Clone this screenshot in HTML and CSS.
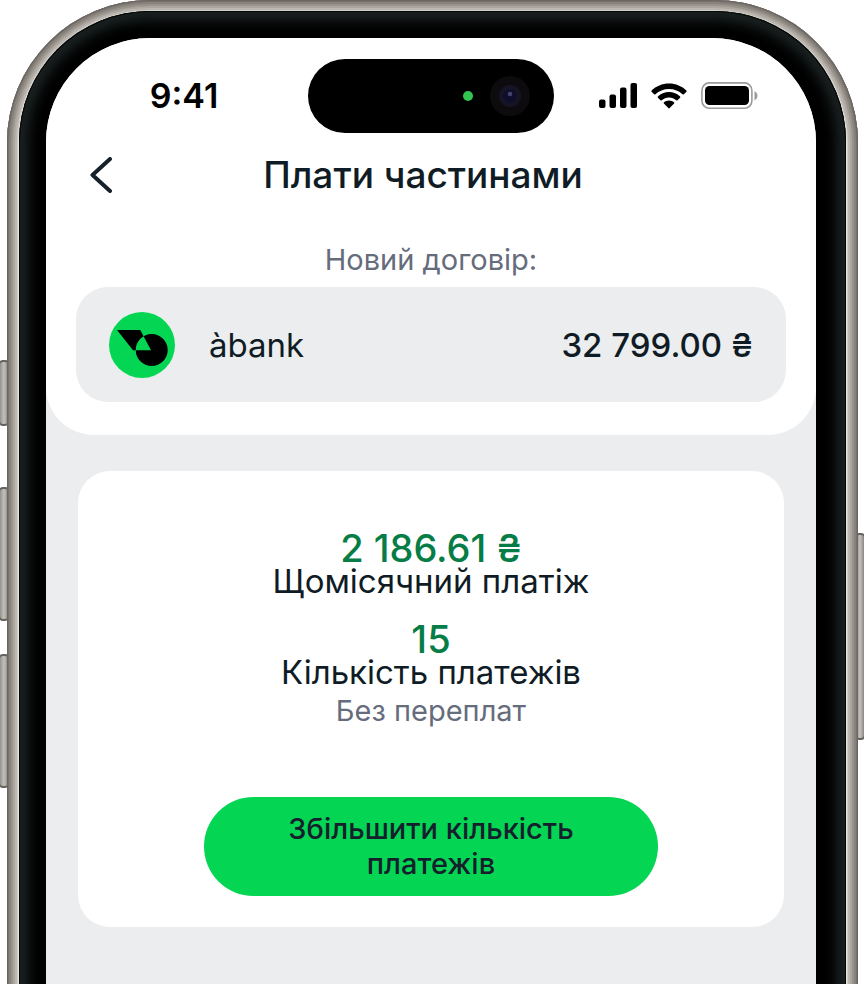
FILE: index.html
```html
<!DOCTYPE html>
<html lang="uk">
  <head>
    <meta charset="UTF-8" />
    <meta name="viewport" content="width=device-width, initial-scale=1.0" />
    <title>Плати частинами</title>
    <link rel="stylesheet" href="styles.css">
  </head>
  <body>
    <div class="stage">
      <!-- Side keys -->
      <span class="key key-left key-action"></span>
      <span class="key key-left key-up"></span>
      <span class="key key-left key-down"></span>
      <span class="key key-right key-power"></span>

      <div class="phone">
        <div class="bezel">
          <main class="screen">
            <section class="top-panel">
              <div class="status-bar">
                <div class="time">9:41</div>
                <div class="island">
                  <span class="dot"></span>
                  <svg class="camera" width="40" height="40" viewBox="0 0 40 40" aria-hidden="true">
                    <circle cx="20" cy="20" r="20" fill="#0d0b0e" />
                    <circle cx="20" cy="20" r="11" fill="#161325" />
                    <circle cx="20" cy="20" r="6.500" fill="#0e0d2c" />
                    <circle cx="20" cy="18" r="2.300" fill="#45436b" />
                  </svg>
                </div>
                <div class="indicators">
                  <svg width="38" height="26" viewBox="0 0 38 26" aria-hidden="true">
                    <rect x="0" y="16.500" width="6.500" height="8.500" rx="2" />
                    <rect x="10.500" y="11.500" width="6.500" height="13.500" rx="2" />
                    <rect x="21" y="4.500" width="6.500" height="20.500" rx="2" />
                    <rect x="31.500" y="0" width="6.500" height="25" rx="2" />
                  </svg>
                  <svg width="36" height="26" viewBox="0 0 36 26" aria-hidden="true">
                    <path d="M18 0.500C11.200 0.500 5 3.200 0.600 7.500c-.4.400-.4.900 0 1.300l2.500 2.500c.4.400.9.400 1.300 0C8 7.900 12.700 5.900 18 5.900s10 2 13.600 5.400c.4.400.9.400 1.300 0l2.500-2.500c.4-.4.400-.9 0-1.300C31 3.200 24.800.500 18 .500z" />
                    <path d="M18 9c-4.300 0-8.200 1.700-11.100 4.400-.4.400-.4.900 0 1.300l2.600 2.600c.3.300.8.300 1.200 0 1.900-1.800 4.500-2.900 7.300-2.900s5.400 1.100 7.300 2.900c.4.300.9.300 1.200 0l2.600-2.600c.4-.4.400-.9 0-1.300C26.200 10.700 22.300 9 18 9z" />
                    <path d="M18 17.500c-1.900 0-3.700.7-5 1.800-.5.400-.5.900-.1 1.300l4.400 4.500c.4.400 1 .4 1.400 0l4.400-4.500c.4-.4.400-.9-.1-1.300-1.300-1.100-3.100-1.800-5-1.800z" />
                  </svg>
                  <svg width="57" height="28" viewBox="0 0 57 28" aria-hidden="true">
                    <rect x="0.900" y="0.900" width="50" height="25.400" rx="7.500" fill="none" stroke="#9b9b9b" stroke-width="1.600" />
                    <rect x="4" y="4" width="44" height="19" rx="4.500" />
                    <path d="M53.500 9.200c1.800.8 3 2.600 3 4.600s-1.200 3.800-3 4.600z" fill="#9b9b9b" />
                  </svg>
                </div>
              </div>

              <header class="app-header">
                <button class="back" type="button" aria-label="Назад">
                  <svg width="22" height="36" viewBox="0 0 22 36" aria-hidden="true">
                    <path d="M20 2L2.500 18L20 34" fill="none" stroke="#17212a" stroke-width="4" stroke-linecap="round" stroke-linejoin="round" />
                  </svg>
                </button>
                <h1>Плати частинами</h1>
              </header>

              <p class="caption">Новий договір:</p>
              <div class="account">
                <svg width="66" height="66" viewBox="0 0 66 66" aria-hidden="true">
                  <circle cx="33" cy="33" r="33" fill="#04d654" />
                  <path fill-rule="evenodd" d="M8 18H31.300L42 38.300H24ZM26.700 38a16 16 0 1 0 32 0a16 16 0 1 0 -32 0Z" />
                </svg>
                <span class="bank">àbank</span>
                <span class="amount">32 799.00 ₴</span>
              </div>
            </section>

            <section class="card">
              <p class="value">2 186.61 ₴</p>
              <p class="label">Щомісячний платіж</p>
              <p class="value value-next">15</p>
              <p class="label">Кількість платежів</p>
              <p class="note">Без переплат</p>
              <button class="btn" type="button">Збільшити кількість платежів</button>
            </section>
          </main>
        </div>
      </div>
    </div>
  </body>
</html>
```
FILE: styles.css
```css
:root {
  --ink: #101c25;
  --muted: #656c7c;
  --surface: #ecedef;
  --green: #04d654;
  --green-dark: #067d46;
}

* {
  box-sizing: border-box;
}

body {
  margin: 0;
  background: #fff;
  color: var(--ink);
  font-family: Inter, "Liberation Sans", sans-serif;
}

h1,
p {
  margin: 0;
}

.stage {
  position: relative;
  display: flex;
  min-height: 100vh;
  overflow: hidden;
}

/* Phone body, runs past the bottom of the window */
.phone {
  position: relative;
  display: flex;
  flex: 1;
  margin: 0 6px -60px 7px;
  padding: 11px 12px;
  border-radius: 143px 143px 0 0;
  background: #e6e3dc;
  box-shadow:
    inset 0 0 0 1px #6b6662,
    inset 0 0 0 2px #77726d,
    inset 0 0 0 4px #88827c,
    inset 0 0 0 6px #99938c,
    inset 0 0 0 8px #aba69f,
    inset 0 0 0 10px #bbb7b0,
    inset 0 0 0 11px #d2cfc8;
}

.bezel {
  display: flex;
  flex: 1;
  padding: 27px 30px 27px 27px;
  border-radius: 131px 131px 0 0;
  background: #000;
  box-shadow:
    inset 0 0 0 1px #050606,
    inset 0 0 12px 10px #1a2020;
}

.screen {
  flex: 1;
  border-radius: 104px 104px 0 0;
  background: var(--surface);
  overflow: hidden;
}

.key {
  position: absolute;
  width: 12px;
  border: 2px solid #66625e;
  border-radius: 5px;
  background: linear-gradient(90deg, #96928d, #c4c1bc, #8b8681);
}

.key-left {
  left: -2px;
}

.key-right {
  right: -2px;
}

.key-action {
  top: 360px;
  height: 66px;
}

.key-up {
  top: 487px;
  height: 134px;
}

.key-down {
  top: 654px;
  height: 134px;
}

.key-power {
  top: 533px;
  height: 207px;
}

.top-panel {
  padding: 21px 30px 33px;
  border-radius: 0 0 48px 48px;
  background: #fff;
}

.status-bar {
  display: grid;
  grid-template-columns: 1fr 246px 1fr;
  align-items: center;
  margin: 0 -16px;
}

.time {
  font-size: 34px;
  font-weight: 600;
  line-height: 40px;
  text-align: center;
  color: #000;
}

.island {
  display: flex;
  align-items: center;
  justify-content: flex-end;
  gap: 17px;
  height: 74px;
  padding: 0 24px;
  border-radius: 37px;
  background: #000;
}

.dot {
  width: 10px;
  height: 10px;
  border-radius: 50%;
  background: #32c552;
}

.indicators {
  display: flex;
  align-items: center;
  justify-content: center;
  gap: 14px;
}

.app-header {
  display: grid;
  grid-template-columns: 22px 1fr 22px;
  align-items: center;
  padding: 17px 30px 0 14px;
}

.back {
  display: flex;
  padding: 0;
  border: none;
  background: none;
  cursor: pointer;
}

h1 {
  font-size: 37px;
  font-weight: 500;
  line-height: 50px;
  text-align: center;
}

.caption {
  margin: 42px 0 9px;
  font-size: 29px;
  line-height: 36px;
  text-align: center;
  color: var(--muted);
}

.account {
  display: flex;
  align-items: center;
  gap: 34px;
  height: 115px;
  padding: 0 33px;
  border-radius: 32px;
  background: var(--surface);
  font-size: 33px;
  line-height: 40px;
}

.amount {
  margin-left: auto;
  font-weight: 500;
}

.card {
  display: flex;
  flex-direction: column;
  align-items: center;
  margin: 36px 32px 0;
  padding: 59px 32px 31px;
  border-radius: 32px;
  background: #fff;
  text-align: center;
}

.value {
  font-size: 38px;
  font-weight: 500;
  line-height: 36px;
  color: var(--green-dark);
}

.value-next {
  margin-top: 24px;
}

.label {
  font-size: 33px;
  line-height: 31px;
}

.note {
  margin-top: 5px;
  font-size: 29px;
  line-height: 36px;
  color: var(--muted);
}

.btn {
  width: 100%;
  max-width: 454px;
  margin-top: 68px;
  padding: 14px 72px 15px;
  border: none;
  border-radius: 50px;
  background: var(--green);
  color: #16202c;
  font-family: inherit;
  font-size: 29px;
  font-weight: 500;
  line-height: 35px;
  cursor: pointer;
}
```
